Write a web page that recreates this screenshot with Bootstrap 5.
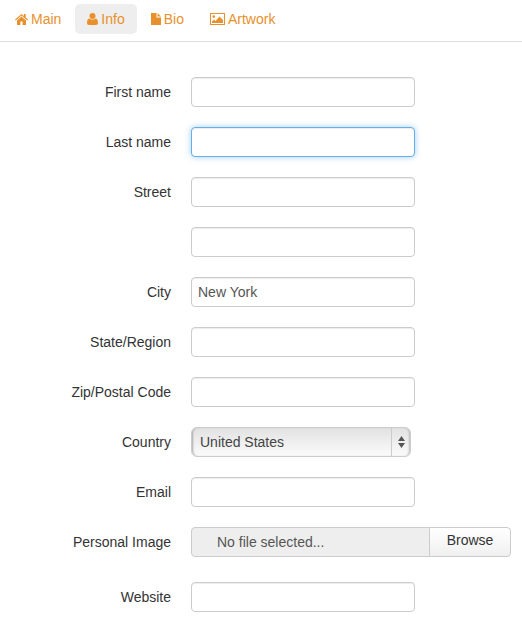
<!DOCTYPE html>
<html lang="en">
<head>
    <meta charset="UTF-8">
    <meta name="viewport" content="width=device-width, initial-scale=1.0">
    <title>Profile</title>
    <link href="https://cdn.jsdelivr.net/npm/bootstrap@5.3.3/dist/css/bootstrap.min.css" rel="stylesheet">
    <style>
        body {
            font-family: "Liberation Sans", Arial, sans-serif;
            font-size: 14px;
            color: #333;
            background: #fff;
            overflow: hidden;
        }
        .tabs-bar {
            height: 42px;
            padding: 4px 3px 0;
            border-bottom: 1px solid #ddd;
            gap: 2px;
        }
        .tabs-bar .nav-link {
            height: 30px;
            padding: 0 12px;
            font-size: 14px;
            line-height: 30px;
            color: #e8912c;
            border-radius: 5px;
            display: flex;
            align-items: center;
            gap: 3px;
        }
        .tabs-bar .nav-link.active {
            background: #eee;
            color: #e8912c;
        }
        .tabs-bar svg { fill: #e8912c; flex: none; }
        .profile-form { padding-top: 35px; }
        .field-row {
            display: flex;
            align-items: center;
            gap: 20px;
            height: 30px;
            margin-bottom: 20px;
        }
        .field-row.file-row { margin-bottom: 25px; }
        .field-label {
            width: 171px;
            margin: 0;
            text-align: right;
            font-size: 14px;
            color: #333;
            flex: none;
        }
        .field-input.form-control {
            width: 224px;
            height: 30px;
            min-height: 0;
            padding: 4px 6px;
            font-size: 14px;
            line-height: 20px;
            color: #555;
            border-color: #ccc;
            border-radius: 4px;
            box-shadow: inset 0 1px 1px rgba(0,0,0,.075);
        }
        .field-input.is-focused {
            border-color: #66afe9;
            box-shadow: inset 0 1px 1px rgba(0,0,0,.075), 0 0 6px rgba(102,175,233,.6);
        }
        .mac-select {
            width: 220px;
            height: 30px;
            border: 1px solid #ccc;
            border-radius: 6px;
            background: linear-gradient(#e2e2e2, #f1f1f1 60%, #fbfbfb);
            box-shadow: inset 2px 0 2px -1px #aaa, inset -2px 0 2px -1px #bbb;
            color: #444;
        }
        .mac-select-value { flex: 1; padding-left: 8px; }
        .mac-select-arrows {
            width: 19px;
            height: 100%;
            border-left: 1px solid #ccc;
        }
        .file-picker { width: 320px; height: 30px; }
        .file-name {
            flex: 1;
            padding-left: 25px;
            line-height: 28px;
            color: #555;
            background: #eee;
            border: 1px solid #ccc;
            border-radius: 4px 0 0 4px;
        }
        .file-browse {
            width: 82px;
            height: 30px;
            padding: 0 0 3px;
            margin-left: -1px;
            font-size: 14px;
            color: #333;
            background: linear-gradient(#fff, #f0f0f0);
            border: 1px solid #ccc;
            border-radius: 0 4px 4px 0;
        }
    </style>
</head>
<body>
    <ul class="nav tabs-bar">
        <li class="nav-item">
            <a class="nav-link" href="#">
                <svg width="13" height="12" viewBox="0 0 13 12"><path d="M6.5 1 0 6.6l.7.8L6.5 2.5l5.8 4.9.7-.8-2.3-2V1H9v2L6.5 1zM2 7.4V12h3.4V8.4h2.2V12H11V7.4L6.5 3.6z"/></svg>
                Main
            </a>
        </li>
        <li class="nav-item">
            <a class="nav-link active" href="#">
                <svg width="11" height="12" viewBox="0 0 11 12"><circle cx="5.5" cy="3" r="3"/><path d="M0 10c0-3 1-4.6 2.6-4.6C3.4 6.200 4.400 6.600 5.500 6.600S7.600 6.200 8.400 5.400C10 5.400 11 7 11 10c0 1.300-.8 2-2 2H2c-1.200 0-2-.7-2-2z"/></svg>
                Info
            </a>
        </li>
        <li class="nav-item">
            <a class="nav-link" href="#">
                <svg width="10" height="12" viewBox="0 0 10 12"><path d="M0 0h5.500v4.500H10V12H0zM6.500 0 10 3.500H6.500z"/></svg>
                Bio
            </a>
        </li>
        <li class="nav-item">
            <a class="nav-link" href="#">
                <svg width="15" height="12" viewBox="0 0 15 12"><path fill-rule="evenodd" d="M0 0h15v12H0zM1 1v10h13V1z"/><circle cx="3.800" cy="3.600" r="1.300"/><path d="M2 10V8.500l2-2 1.500 1.500L9.500 3.500 13 7v3z"/></svg>
                Artwork
            </a>
        </li>
    </ul>

    <form class="profile-form">
        <div class="field-row">
            <label class="field-label">First name</label>
            <input type="text" class="form-control field-input">
        </div>
        <div class="field-row">
            <label class="field-label">Last name</label>
            <input type="text" class="form-control field-input is-focused">
        </div>
        <div class="field-row">
            <label class="field-label">Street</label>
            <input type="text" class="form-control field-input">
        </div>
        <div class="field-row">
            <span class="field-label"></span>
            <input type="text" class="form-control field-input">
        </div>
        <div class="field-row">
            <label class="field-label">City</label>
            <input type="text" class="form-control field-input" value="New York">
        </div>
        <div class="field-row">
            <label class="field-label">State/Region</label>
            <input type="text" class="form-control field-input">
        </div>
        <div class="field-row">
            <label class="field-label">Zip/Postal Code</label>
            <input type="text" class="form-control field-input">
        </div>
        <div class="field-row">
            <label class="field-label">Country</label>
            <div class="mac-select d-flex align-items-center">
                <span class="mac-select-value">United States</span>
                <span class="mac-select-arrows d-flex align-items-center justify-content-center">
                    <svg width="7" height="12" viewBox="0 0 7 12" fill="#555"><path d="M3.500 0 7 5H0zM0 7h7l-3.500 5z"/></svg>
                </span>
            </div>
        </div>
        <div class="field-row">
            <label class="field-label">Email</label>
            <input type="text" class="form-control field-input">
        </div>
        <div class="field-row file-row">
            <label class="field-label">Personal Image</label>
            <div class="file-picker d-flex">
                <span class="file-name">No file selected...</span>
                <button type="button" class="file-browse">Browse</button>
            </div>
        </div>
        <div class="field-row">
            <label class="field-label">Website</label>
            <input type="text" class="form-control field-input">
        </div>
    </form>

    <script src="https://cdn.jsdelivr.net/npm/bootstrap@5.3.3/dist/js/bootstrap.bundle.min.js"></script>
</body>
</html>
